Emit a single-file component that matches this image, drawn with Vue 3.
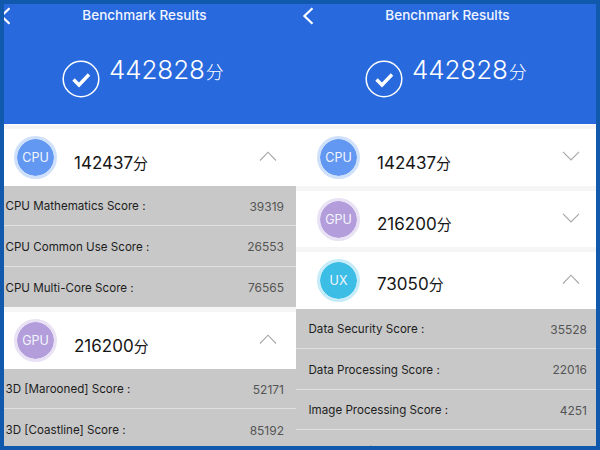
<script setup>
const sections = {
  cpu: { tag: 'CPU', score: '142437', cls: 'cpu', rows: [['CPU Mathematics Score :', '39319'], ['CPU Common Use Score :', '26553'], ['CPU Multi-Core Score :', '76565']] },
  gpu: { tag: 'GPU', score: '216200', cls: 'gpu', rows: [['3D [Marooned] Score :', '52171'], ['3D [Coastline] Score :', '85192']] },
  ux: { tag: 'UX', score: '73050', cls: 'ux', rows: [['Data Security Score :', '35528'], ['Data Processing Score :', '22016'], ['Image Processing Score :', '4251'], ['User Experience Score :', '11255']] },
}
const panels = [
  { id: 'left', items: [{ ...sections.cpu, open: true }, { ...sections.gpu, open: true }] },
  { id: 'right', items: [{ ...sections.cpu, open: false }, { ...sections.gpu, open: false }, { ...sections.ux, open: true }] },
]
</script>

<template>
  <div class="frame">
    <div v-for="p in panels" :key="p.id" class="panel" :class="p.id">
      <div class="phone">
        <header class="hero">
          <svg class="back" width="12" height="18" viewBox="0 0 12 18"><path d="M10.5 1.2 2.4 9l8.1 7.8" fill="none" stroke="#fff" stroke-width="2.2" /></svg>
          <div class="title">Benchmark Results</div>
          <div class="total">
            <svg class="check" width="38" height="38" viewBox="0 0 38 38">
              <circle cx="19" cy="19" r="17.8" fill="none" stroke="#fff" stroke-width="1.5" />
              <path d="M11.5 19.5 17 25 27 14.5" fill="none" stroke="#fff" stroke-width="3.4" />
            </svg>
            <div class="total-num">442828<span class="fen">分</span></div>
          </div>
        </header>
        <div class="strip"></div>
        <template v-for="s in p.items" :key="s.tag">
          <div class="card">
            <div class="badge" :class="s.cls"><span>{{ s.tag }}</span></div>
            <div class="score">{{ s.score }}<span class="fen-sm">分</span></div>
            <svg class="chev" width="18" height="10" viewBox="0 0 18 10">
              <path :d="s.open ? 'M1 9.5 9 1.2l8 8.3' : 'M1 .8 9 9l8-8.2'" fill="none" stroke="#a6a6a6" stroke-width="1.1" />
            </svg>
          </div>
          <div v-if="s.open" class="rows">
            <div v-for="r in s.rows" :key="r[0]" class="row">
              <span class="label">{{ r[0] }}</span>
              <span class="value">{{ r[1] }}</span>
            </div>
          </div>
          <div class="gap"></div>
        </template>
      </div>
    </div>
  </div>
</template>

<style scoped>
.frame {
  box-sizing: border-box;
  width: 600px;
  height: 450px;
  border: 4px solid #1059ad;
  display: flex;
  overflow: hidden;
  font-family: Inter, "Noto Sans CJK SC", sans-serif;
}
.panel { overflow: hidden; height: 442px; background: #f5f5f5; flex: none; }
.panel.left { width: 292px; }
.panel.right { width: 300px; }
.phone { width: 303px; }
.left .phone { margin-left: -11px; }
.hero { height: 120px; background: #2869de; color: #fff; position: relative; }
.back { position: absolute; left: 6px; top: 3px; }
.title { text-align: center; font-size: 13.5px; font-weight: 500; line-height: 23px; color: #f2f6fe; }
.total { display: flex; padding: 33px 0 0 69px; }
.check { flex: none; }
.total-num { margin: -6px 0 0 9px; font-size: 26px; font-weight: 300; line-height: 32px; letter-spacing: -.1px; }
.fen { font-size: 18px; margin-left: 1px; }
.strip { height: 5px; background: linear-gradient(#fff 1px, #f5f5f5 1px); }
.card {
  height: 56.5px;
  background: #fff;
  display: flex;
  align-items: flex-start;
  padding-left: 21px;
  position: relative;
}
.badge {
  flex: none;
  box-sizing: border-box;
  width: 43px;
  height: 43px;
  margin-top: 7px;
  border-radius: 50%;
  display: flex;
  align-items: center;
  justify-content: center;
  color: #f3f6fd;
  font-size: 12.5px;
  background-clip: padding-box;
  border: 3px solid;
}
.cpu { background-color: #6398f2; border-color: #cfe0fa; }
.gpu { background-color: #b39ddb; border-color: #e9e1f4; }
.ux { background-color: #3cbde6; border-color: #c5ecf8; }
.score { margin: 21.5px 0 0 17px; font-size: 17px; line-height: 24px; color: #161616; }
.ux + .score { margin-top: 19.5px; }
.fen-sm { font-size: 15px; }
.chev { position: absolute; right: 19px; top: 22px; }
.gap { height: 5px; }
.rows { background: #c8c8c8; }
.row {
  box-sizing: border-box;
  height: 40.5px;
  padding: 2px 12px 0 12.5px;
  display: flex;
  align-items: center;
  justify-content: space-between;
  font-size: 11.6px;
  border-bottom: 1px solid #e0e0e0;
}
.rows .row:last-child { border-bottom: 0; }
.label { color: #1d1d1d; }
.value { color: #555; font-size: 12px; }
</style>
<style>
html, body { margin: 0; background: #fff; }
</style>
